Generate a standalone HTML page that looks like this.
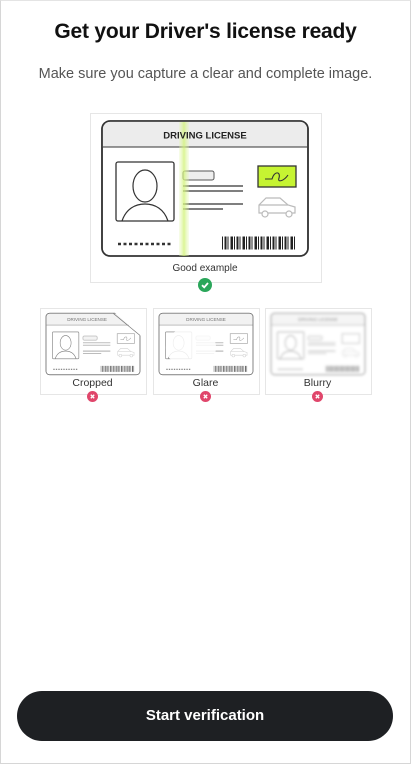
<!DOCTYPE html>
<html><head><meta charset="utf-8"><style>
html,body{margin:0;padding:0}
body{width:411px;height:764px;position:relative;background:#fff;font-family:"Liberation Sans",sans-serif;overflow:hidden}
.frame{position:absolute;left:0;top:0;width:409px;height:762px;border:1px solid #d6d6d6;border-top-color:#e4e4e4}
h1{position:absolute;top:20px;left:0;width:411px;text-align:center;margin:0;font-size:21px;font-weight:bold;color:#111;letter-spacing:-0.2px}
.sub{position:absolute;top:66px;left:0;width:411px;text-align:center;font-size:14.5px;color:#555}
.box{position:absolute;border:1px solid #e6e6e6;background:#fff}
.lbl{position:absolute;width:100%;text-align:center;color:#333}
.btn{position:absolute;left:17px;top:691px;width:376px;height:50px;border-radius:25px;background:#1e2023;color:#fff;font-weight:bold;font-size:15px;text-align:center;line-height:50px}
svg{position:absolute;overflow:visible}
</style></head><body>
<div class="frame"></div>
<h1>Get your Driver's license ready</h1>
<div class="sub">Make sure you capture a clear and complete image.</div>

<svg width="0" height="0" style="position:absolute">
<defs>
<linearGradient id="gl" x1="0" x2="1" y1="0" y2="0"><stop offset="0" stop-color="#e4f7b0" stop-opacity="0.3"/><stop offset="0.5" stop-color="#d2f37a"/><stop offset="1" stop-color="#e4f7b0" stop-opacity="0.3"/></linearGradient>
<g id="card">
<rect x="0" y="0" width="206" height="135" rx="8" fill="#fff" stroke="#333" stroke-width="1.6"/>
<path d="M8 0.8 H198 a7 7 0 0 1 7 7 V26 H0.8 V8 a7 7 0 0 1 7-7z" fill="#ececec"/>
<line x1="0.8" y1="26" x2="205.2" y2="26" stroke="#333" stroke-width="1"/>
<rect x="0" y="0" width="206" height="135" rx="8" fill="none" stroke="#333" stroke-width="1.6"/>
<rect x="14" y="41" width="58" height="59" rx="2" fill="none" stroke="#333" stroke-width="1.3"/>
<ellipse cx="43" cy="65" rx="12" ry="16" fill="none" stroke="#333" stroke-width="1.2"/>
<path d="M20 100 C24 88 33 83 43 83 C53 83 62 88 66 100" fill="none" stroke="#333" stroke-width="1.2"/>
<rect x="81" y="50" width="31" height="9" rx="2" fill="#eee" stroke="#555" stroke-width="1"/>
<line x1="81" y1="65" x2="141" y2="65" stroke="#333" stroke-width="1.2"/>
<line x1="81" y1="70" x2="141" y2="70" stroke="#333" stroke-width="1.2"/>
<line x1="81" y1="83" x2="141" y2="83" stroke="#333" stroke-width="1.2"/>
<line x1="81" y1="88" x2="121" y2="88" stroke="#333" stroke-width="1.2"/>
<g fill="none" stroke="#bbb" stroke-width="1.2"><path d="M157 92 V84 L164 77 H178 L186 84 L193 86 V92 Z"/><circle cx="163" cy="93" r="3" fill="#fff"/><circle cx="187" cy="93" r="3" fill="#fff"/><line x1="157" y1="84" x2="186" y2="84"/></g>
<line x1="16" y1="123" x2="71" y2="123" stroke="#333" stroke-width="2.5" stroke-dasharray="3 2.5"/>
<line x1="120" y1="122" x2="194" y2="122" stroke="#222" stroke-width="13" stroke-dasharray="1 1.5 2 1 1 2 2.5 1"/>
</g>
</defs>
</svg>

<div class="box" style="left:90px;top:113px;width:230px;height:168px"></div>
<svg style="left:102px;top:121px" width="206" height="135" viewBox="0 0 206 135">
<use href="#card"/>
<rect x="156" y="45" width="38" height="21" fill="#c6f432" stroke="#333" stroke-width="1.3"/>
<path d="M163 58 H170 C172 50 179 50 177 57 C175 62 182 60 186 54" fill="none" stroke="#333" stroke-width="1.1"/>
<rect x="77" y="1" width="10" height="134" fill="url(#gl)" opacity="0.8"/>
<text x="103" y="17.5" text-anchor="middle" font-family="Liberation Sans" font-weight="bold" font-size="9.5" fill="#222">DRIVING LICENSE</text>
</svg>
<div class="lbl" style="left:90px;width:230px;top:263px;font-size:10px">Good example</div>
<svg style="left:198px;top:278px" width="14" height="14"><circle cx="7" cy="7" r="7" fill="#2aa65a"/><path d="M4 7.2 L6.2 9.3 L10 5" fill="none" stroke="#fff" stroke-width="1.8"/></svg>

<div class="box" style="left:40px;top:308px;width:105px;height:85px"></div>
<svg style="left:46px;top:313px;opacity:.65" width="94" height="62" viewBox="0 0 206 135">
<use href="#card"/>
<rect x="156" y="45" width="38" height="21" fill="#fff" stroke="#666" stroke-width="1.3"/>
<path d="M163 58 H170 C172 50 179 50 177 57 C175 62 182 60 186 54" fill="none" stroke="#666" stroke-width="1.1"/>
<text x="90" y="17.5" text-anchor="middle" font-family="Liberation Sans" font-size="10" fill="#222">DRIVING LICENSE</text>
<path d="M150 -2 L208 50 V-2 Z" fill="#fff"/><path d="M148 0.8 L205.2 48" stroke="#333" stroke-width="1.6"/>
</svg>
<div class="lbl" style="left:40px;width:105px;top:377px;font-size:10.5px">Cropped</div>
<svg style="left:87px;top:391px" width="11" height="11"><circle cx="5.5" cy="5.5" r="5.5" fill="#e0466b"/><path d="M3.8 3.8 L7.2 7.2 M7.2 3.8 L3.8 7.2" stroke="#fff" stroke-width="1.4"/></svg>

<div class="box" style="left:153px;top:308px;width:105px;height:85px"></div>
<svg style="left:159px;top:313px;opacity:.65" width="94" height="62" viewBox="0 0 206 135">
<use href="#card"/>
<rect x="156" y="45" width="38" height="21" fill="#fff" stroke="#666" stroke-width="1.3"/>
<path d="M163 58 H170 C172 50 179 50 177 57 C175 62 182 60 186 54" fill="none" stroke="#666" stroke-width="1.1"/>
<text x="103" y="17.5" text-anchor="middle" font-family="Liberation Sans" font-size="10" fill="#222">DRIVING LICENSE</text>
<ellipse cx="70" cy="75" rx="55" ry="45" fill="#fff" opacity="0.85"/>
</svg>
<div class="lbl" style="left:153px;width:105px;top:377px;font-size:10.5px">Glare</div>
<svg style="left:200px;top:391px" width="11" height="11"><circle cx="5.5" cy="5.5" r="5.5" fill="#e0466b"/><path d="M3.8 3.8 L7.2 7.2 M7.2 3.8 L3.8 7.2" stroke="#fff" stroke-width="1.4"/></svg>

<div class="box" style="left:265px;top:308px;width:105px;height:85px"></div>
<svg style="left:271px;top:313px;opacity:.5;filter:blur(1.2px)" width="94" height="62" viewBox="0 0 206 135">
<use href="#card"/>
<rect x="156" y="45" width="38" height="21" fill="#fff" stroke="#666" stroke-width="1.3"/>
<text x="103" y="17.5" text-anchor="middle" font-family="Liberation Sans" font-size="10" fill="#222">DRIVING LICENSE</text>
</svg>
<div class="lbl" style="left:265px;width:105px;top:377px;font-size:10.5px">Blurry</div>
<svg style="left:312px;top:391px" width="11" height="11"><circle cx="5.5" cy="5.5" r="5.5" fill="#e0466b"/><path d="M3.8 3.8 L7.2 7.2 M7.2 3.8 L3.8 7.2" stroke="#fff" stroke-width="1.4"/></svg>

<div class="btn">Start verification</div>
</body></html>
